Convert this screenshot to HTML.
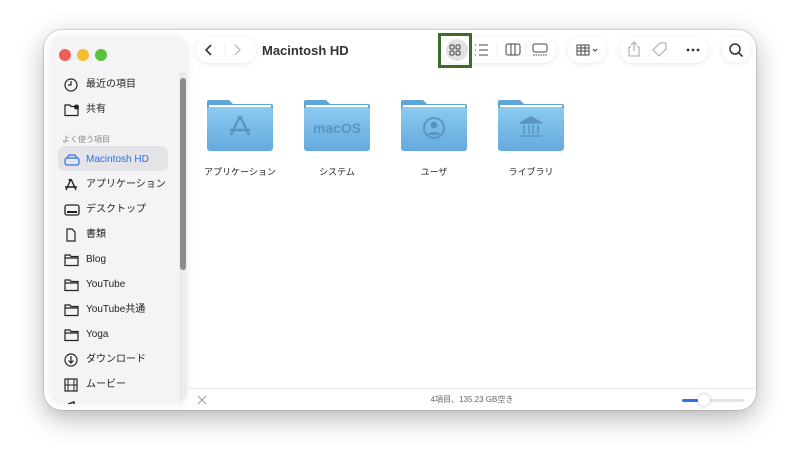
<!DOCTYPE html>
<html><head><meta charset="utf-8"><style>
*{margin:0;padding:0;box-sizing:border-box}
body{width:800px;height:468px;background:#fff;font-family:"Liberation Sans","Noto Sans CJK JP",sans-serif;position:relative;overflow:hidden}
.win{position:absolute;left:44px;top:30px;width:712px;height:380px;border-radius:18px;background:#fff;box-shadow:0 8px 26px rgba(0,0,0,.3),0 0 0 1px rgba(0,0,0,.12);overflow:hidden}
.side{position:absolute;left:6px;top:6px;width:138px;height:368px;background:#f4f4f6;border-radius:14px;box-shadow:0 0 8px rgba(0,0,0,.08);overflow:hidden}
.dot{position:absolute;top:13px;width:12px;height:12px;border-radius:50%}
.item{position:absolute;left:14px;font-size:10px;color:#222;height:16px;line-height:16px}
.item svg{position:absolute;left:0;top:1px}
.item span{position:absolute;left:22px;white-space:nowrap}
.sel{position:absolute;left:8px;top:110px;width:110px;height:25px;background:#e4e4e8;border-radius:7px}
.scroll{position:absolute;left:129px;top:36px;width:8px;height:330px;background:#ececec;border-radius:4px}
.scroll div{position:absolute;left:1px;top:6px;width:6px;height:192px;background:#8a8a8a;border-radius:3px}
.pill{position:absolute;top:7px;height:26px;background:#fff;border-radius:13px;box-shadow:0 1px 6px rgba(0,0,0,.1)}
.folder{position:absolute;top:68px;width:66px;height:53px}
.lbl{position:absolute;top:135px;font-size:9px;color:#222;text-align:center;width:100px}
.bottom{position:absolute;left:144px;top:358px;width:568px;height:22px;border-top:1px solid #e6e6e6;background:#fff}
</style></head><body>
<svg width="0" height="0" style="position:absolute"><defs><linearGradient id="g" x1="0" y1="0" x2="0" y2="1"><stop offset="0" stop-color="#8ccaf0"/><stop offset="1" stop-color="#64aadd"/></linearGradient></defs></svg>
<div class="win">
 <div class="side">
  <div class="dot" style="left:9px;background:#ec5f57"></div>
  <div class="dot" style="left:27px;background:#f3be2f"></div>
  <div class="dot" style="left:45px;background:#5ac13c"></div>
  <div class="item" style="top:41px"><svg width="14" height="14"><circle cx="7" cy="7" r="6" fill="none" stroke="#222" stroke-width="1.2"/><path d="M7 3v4h-3" fill="none" stroke="#222" stroke-width="1.2"/></svg><span>最近の項目</span></div>
  <div class="item" style="top:66px"><svg width="16" height="14"><path d="M1 2h5l1 1.5h7v9H1z" fill="none" stroke="#222" stroke-width="1.2"/><circle cx="12.5" cy="4" r="2.5" fill="#222"/></svg><span>共有</span></div>
  <div style="position:absolute;left:12px;top:98px;font-size:8px;color:#888">よく使う項目</div>
  <div class="sel"></div>
  <div class="item" style="top:116px;color:#2f6fe8"><svg width="16" height="14"><rect x="1" y="5" width="14" height="7" rx="2" fill="none" stroke="#2f6fe8" stroke-width="1.2"/><path d="M3 5l2-3h6l2 3" fill="none" stroke="#2f6fe8" stroke-width="1.2"/></svg><span>Macintosh HD</span></div>
  <div class="item" style="top:141px"><svg width="14" height="14"><path d="M7 1L2 12M7 1l5 11M1 9h12M5 1l1 2" fill="none" stroke="#222" stroke-width="1.4"/></svg><span>アプリケーション</span></div>
  <div class="item" style="top:166px"><svg width="16" height="14"><rect x="1" y="2" width="14" height="10" rx="2" fill="none" stroke="#222" stroke-width="1.3"/><rect x="3" y="8" width="10" height="2" fill="#222"/></svg><span>デスクトップ</span></div>
  <div class="item" style="top:191px"><svg width="14" height="14"><path d="M3 1h5l3 3v9H3z" fill="none" stroke="#222" stroke-width="1.2"/></svg><span>書類</span></div>
  <div class="item" style="top:216px"><svg width="16" height="14"><path d="M1 2h5l1 1.5h7v9H1zM1 5h13" fill="none" stroke="#222" stroke-width="1.2"/></svg><span>Blog</span></div>
  <div class="item" style="top:241px"><svg width="16" height="14"><path d="M1 2h5l1 1.5h7v9H1zM1 5h13" fill="none" stroke="#222" stroke-width="1.2"/></svg><span>YouTube</span></div>
  <div class="item" style="top:266px"><svg width="16" height="14"><path d="M1 2h5l1 1.5h7v9H1zM1 5h13" fill="none" stroke="#222" stroke-width="1.2"/></svg><span>YouTube共通</span></div>
  <div class="item" style="top:291px"><svg width="16" height="14"><path d="M1 2h5l1 1.5h7v9H1zM1 5h13" fill="none" stroke="#222" stroke-width="1.2"/></svg><span>Yoga</span></div>
  <div class="item" style="top:316px"><svg width="14" height="14"><circle cx="7" cy="7" r="6" fill="none" stroke="#222" stroke-width="1.2"/><path d="M7 3v7M4.5 7.5L7 10l2.5-2.5" fill="none" stroke="#222" stroke-width="1.2"/></svg><span>ダウンロード</span></div>
  <div class="item" style="top:341px"><svg width="14" height="14"><rect x="1" y="1" width="12" height="12" fill="none" stroke="#222" stroke-width="1.2"/><path d="M4 1v12M10 1v12M1 7h12" stroke="#222" stroke-width="1"/></svg><span>ムービー</span></div>
  <div class="item" style="top:364px"><svg width="14" height="14"><path d="M4 3l6-2v9" fill="none" stroke="#222" stroke-width="1.4"/></svg></div>
  <div class="scroll"><div></div></div>
 </div>
 <div class="pill" style="left:152px;width:60px"></div>
 <svg style="position:absolute;left:152px;top:7px" width="60" height="26"><path d="M15 8l-5 5 5 5" fill="none" stroke="#333" stroke-width="1.6"/><path d="M39 8l5 5-5 5" fill="none" stroke="#bbb" stroke-width="1.4"/><path d="M29 7v12" stroke="#eee"/></svg>
 <div style="position:absolute;left:218px;top:13px;font-size:13px;font-weight:bold;color:#333">Macintosh HD</div>
 <div class="pill" style="left:398px;width:114px"></div>
 <div style="position:absolute;left:402px;top:9px;width:22px;height:22px;border-radius:11px;background:#e2e2e2"></div>
 <div style="position:absolute;left:394px;top:3px;width:34px;height:35px;border:3px solid #3f6b2a"></div>
 <svg style="position:absolute;left:398px;top:7px" width="114" height="26">
  <g fill="none" stroke="#444" stroke-width="1"><rect x="8" y="8" width="4" height="4" rx="1"/><rect x="14" y="8" width="4" height="4" rx="1"/><rect x="8" y="14" width="4" height="4" rx="1"/><rect x="14" y="14" width="4" height="4" rx="1"/>
  <path d="M37 8h9M37 13h9M37 18h9" /><path d="M33 8h1M33 13h1M33 18h1"/>
  <rect x="64" y="7" width="14" height="11" rx="2"/><path d="M69 7v11M73 7v11"/>
  <rect x="91" y="7" width="14" height="8" rx="2"/><path d="M91 18h14" stroke-dasharray="1.5 1"/></g>
  <path d="M55 6v14M84 6v14" stroke="#eee"/>
 </svg>
 <div class="pill" style="left:524px;width:38px"></div>
 <svg style="position:absolute;left:524px;top:7px" width="38" height="26"><g fill="none" stroke="#444" stroke-width="1"><rect x="9" y="8" width="12" height="10"/><path d="M9 11h12M9 14h12M13 8v10M17 8v10"/></g><path d="M25 12l2 2 2-2" fill="none" stroke="#444" stroke-width="1.1"/></svg>
 <div class="pill" style="left:576px;width:88px"></div>
 <svg style="position:absolute;left:576px;top:7px" width="88" height="26"><g fill="none" stroke="#aaa" stroke-width="1.1"><path d="M11 10H9v9h10v-9h-2M14 5v9M11 8l3-3 3 3"/><path d="M40 6h6v6l-7 7-6-6z"/></g><g fill="#333"><circle cx="68" cy="13" r="1.4"/><circle cx="73" cy="13" r="1.4"/><circle cx="78" cy="13" r="1.4"/></g></svg>
 <div class="pill" style="left:678px;width:28px"></div>
 <svg style="position:absolute;left:678px;top:7px" width="28" height="26"><circle cx="13" cy="12" r="5" fill="none" stroke="#333" stroke-width="1.5"/><path d="M16.5 15.5l4 4" stroke="#333" stroke-width="1.6"/></svg>

 <svg class="folder" style="left:163px" viewBox="0 0 66 53"><path d="M2 2h20l4 4h38a2 2 0 0 1 2 2v4H0V4a2 2 0 0 1 2-2z" fill="#5ea6d8"/><rect x="2" y="7" width="62" height="4" fill="#fff"/><rect x="0" y="9" width="66" height="44" rx="3" fill="url(#g)"/><path d="M33 18l-9 19M33 18l9 19M23 32h20" stroke="#5b94c2" stroke-width="2.4" fill="none"/></svg>
 <svg class="folder" style="left:260px" viewBox="0 0 66 53"><path d="M2 2h20l4 4h38a2 2 0 0 1 2 2v4H0V4a2 2 0 0 1 2-2z" fill="#5ea6d8"/><rect x="2" y="7" width="62" height="4" fill="#fff"/><rect x="0" y="9" width="66" height="44" rx="3" fill="url(#g)"/><text x="33" y="35" font-size="14" font-weight="bold" fill="#5b94c2" text-anchor="middle" font-family="Liberation Sans">macOS</text></svg>
 <svg class="folder" style="left:357px" viewBox="0 0 66 53"><path d="M2 2h20l4 4h38a2 2 0 0 1 2 2v4H0V4a2 2 0 0 1 2-2z" fill="#5ea6d8"/><rect x="2" y="7" width="62" height="4" fill="#fff"/><rect x="0" y="9" width="66" height="44" rx="3" fill="url(#g)"/><circle cx="33" cy="30" r="10" fill="none" stroke="#5b94c2" stroke-width="2"/><circle cx="33" cy="27" r="3.5" fill="#5b94c2"/><path d="M26 37a8 6 0 0 1 14 0" fill="#5b94c2"/></svg>
 <svg class="folder" style="left:454px" viewBox="0 0 66 53"><path d="M2 2h20l4 4h38a2 2 0 0 1 2 2v4H0V4a2 2 0 0 1 2-2z" fill="#5ea6d8"/><rect x="2" y="7" width="62" height="4" fill="#fff"/><rect x="0" y="9" width="66" height="44" rx="3" fill="url(#g)"/><path d="M22 25l11-6 11 6z M22 38h22" fill="#5b94c2" stroke="#5b94c2" stroke-width="1.5"/><path d="M26 27v9M31 27v9M35 27v9M40 27v9" stroke="#5b94c2" stroke-width="1.5"/></svg>
 <div class="lbl" style="left:146px">アプリケーション</div>
 <div class="lbl" style="left:243px">システム</div>
 <div class="lbl" style="left:340px">ユーザ</div>
 <div class="lbl" style="left:437px">ライブラリ</div>

 <div class="bottom">
  <svg style="position:absolute;left:8px;top:5px" width="12" height="12"><path d="M2 2l8 8M10 2l-8 8" stroke="#999" stroke-width="1"/></svg>
  <div style="position:absolute;left:0;width:568px;top:5px;text-align:center;font-size:8px;color:#666">4項目、135.23 GB空き</div>
  <div style="position:absolute;left:494px;top:10px;width:62px;height:3px;background:#e4e4e4;border-radius:2px"></div>
  <div style="position:absolute;left:494px;top:10px;width:16px;height:3px;background:#2f6fe8;border-radius:2px"></div>
  <div style="position:absolute;left:510px;top:5px;width:12px;height:12px;border-radius:6px;background:#fff;box-shadow:0 0 3px rgba(0,0,0,.3)"></div>
 </div>
</div>
</body></html>
